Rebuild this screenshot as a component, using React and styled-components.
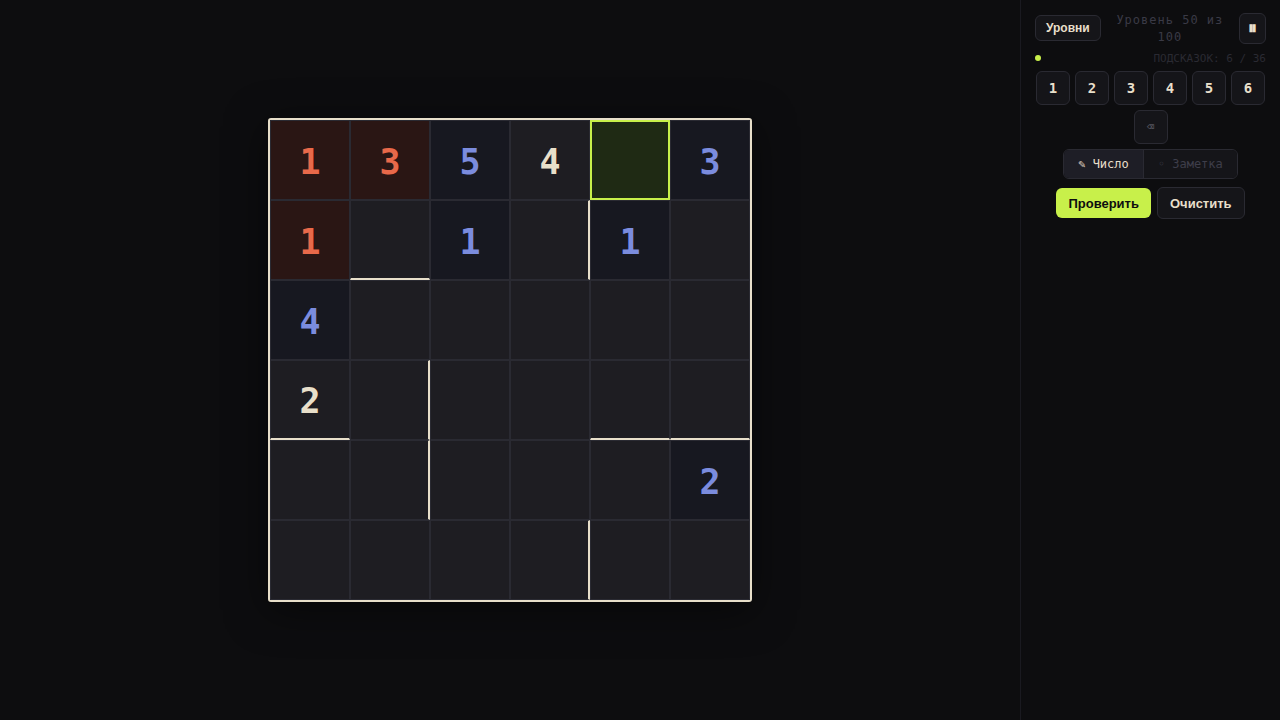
import React from "react";
import styled, { createGlobalStyle, css } from "styled-components";

const MONO = '"DejaVu Sans Mono", "Liberation Mono", monospace';
const SANS = '"Liberation Sans", sans-serif';
const CREAM = "#e8dfca";

const GlobalStyle = createGlobalStyle`
  * { box-sizing: border-box; }
  body { margin: 0; background: #0d0d0f; color: ${CREAM}; }
  button { font-family: inherit; cursor: pointer; }
`;

const Page = styled.div`
  display: flex;
  min-height: 100vh;
  background: #0d0d0f;
  font-family: ${MONO};
`;

const Stage = styled.main`
  flex: 1;
  display: flex;
  align-items: center;
  justify-content: center;
  padding: 24px;
`;

const Board = styled.div`
  display: grid;
  grid-template-columns: repeat(6, 80px);
  grid-auto-rows: 80px;
  border: 2px solid ${CREAM};
  border-radius: 3px;
  overflow: hidden;
  box-shadow: 0 8px 40px rgba(0, 0, 0, 0.5);
`;

const tones = {
  empty: { bg: "#1e1d22", fg: CREAM },
  given: { bg: "#1e1d22", fg: CREAM },
  user: { bg: "#171820", fg: "#7b8cde" },
  error: { bg: "#2a1614", fg: "#e8694a" },
  selected: { bg: "#1f2a14", fg: "#c8f04a" },
};

const Cell = styled.button`
  display: flex;
  align-items: center;
  justify-content: center;
  padding: 4px 0 0;
  border: 1px solid #2a2a32;
  background: ${(p) => tones[p.$tone].bg};
  color: ${(p) => tones[p.$tone].fg};
  font-size: 35px;
  font-weight: 700;
  line-height: 1;
  ${(p) => p.$wall === "right" && css`border-right: 2px solid ${CREAM};`}
  ${(p) => p.$wall === "bottom" && css`border-bottom: 2px solid ${CREAM};`}
  ${(p) => p.$tone === "selected" && css`border: 2px solid #c8f04a;`}
`;

const Sidebar = styled.aside`
  width: 260px;
  flex: none;
  display: flex;
  flex-direction: column;
  padding: 10px 14px;
  border-left: 1px solid #1a1a20;
`;

const Header = styled.header`
  display: flex;
  align-items: center;
  justify-content: space-between;
  gap: 8px;
`;

const Button = styled.button`
  padding: 0 10px;
  height: 26px;
  border: 1px solid #2a2a32;
  border-radius: 6px;
  background: #151519;
  color: ${CREAM};
  font-size: 12px;
  font-weight: 700;
`;

const PauseButton = styled(Button)`
  width: 27px;
  height: 31px;
  padding: 0;
  font-size: 18px;
  line-height: 1;
`;

const Title = styled.h1`
  flex: 1;
  margin: 0;
  padding-top: 2px;
  text-align: center;
  color: #3a3a46;
  font-size: 12px;
  line-height: 17px;
  font-weight: 400;
  letter-spacing: 1px;
`;

const Status = styled.div`
  display: flex;
  align-items: center;
  justify-content: space-between;
  height: 16px;
  margin: 4px 0 5px;
  color: #2a2a32;
  font-size: 11px;
`;

const Dot = styled.span`
  width: 6px;
  height: 6px;
  border-radius: 50%;
  background: #c8f04a;
`;

const Keypad = styled.div`
  display: flex;
  flex-wrap: wrap;
  justify-content: center;
  gap: 5px;
`;

const Key = styled(Button)`
  width: 34px;
  height: 34px;
  padding: 0;
  font-size: 14px;
  ${(p) => p.$muted && css`color: #55555f; font-size: 12px; font-weight: 400;`}
`;

const Modes = styled.div`
  align-self: center;
  display: flex;
  height: 30px;
  margin: 5px 0 8px;
  border: 1px solid #2a2a32;
  border-radius: 6px;
  overflow: hidden;
`;

const Mode = styled.button`
  padding: 0 14px;
  border: 0;
  background: ${(p) => (p.$active ? "#1e1e26" : "#151519")};
  color: ${(p) => (p.$active ? CREAM : "#3e3e4a")};
  font-size: 12px;
  & + & { border-left: 1px solid #2a2a32; }
`;

const Actions = styled.div`
  display: flex;
  justify-content: center;
  align-items: center;
  gap: 6px;
`;

const Action = styled(Button)`
  height: 32px;
  padding: 0 12px;
  font-family: ${SANS};
  font-size: 13px;
  ${(p) => p.$primary && css`
    height: 30px;
    border: 0;
    background: #c8f04a;
    color: #0d0d0f;
  `}
`;

const LevelsButton = styled(Button)`
  font-family: ${SANS};
`;

const cells = {
  "0-0": { value: 1, tone: "error" },
  "0-1": { value: 3, tone: "error" },
  "0-2": { value: 5, tone: "user" },
  "0-3": { value: 4, tone: "given" },
  "0-4": { tone: "selected" },
  "0-5": { value: 3, tone: "user" },
  "1-0": { value: 1, tone: "error" },
  "1-1": { wall: "bottom" },
  "1-2": { value: 1, tone: "user" },
  "1-3": { wall: "right" },
  "1-4": { value: 1, tone: "user" },
  "2-0": { value: 4, tone: "user" },
  "3-0": { value: 2, tone: "given", wall: "bottom" },
  "3-1": { wall: "right" },
  "3-4": { wall: "bottom" },
  "3-5": { wall: "bottom" },
  "4-1": { wall: "right" },
  "4-5": { value: 2, tone: "user" },
  "5-3": { wall: "right" },
};

const size = [0, 1, 2, 3, 4, 5];

export default function App() {
  return (
    <>
      <GlobalStyle />
      <Page>
        <Stage>
          <Board>
            {size.map((row) =>
              size.map((col) => {
                const { value, tone = "empty", wall } = cells[`${row}-${col}`] || {};
                return (
                  <Cell key={`${row}-${col}`} $tone={tone} $wall={wall}>
                    {value}
                  </Cell>
                );
              })
            )}
          </Board>
        </Stage>
        <Sidebar>
          <Header>
            <LevelsButton>Уровни</LevelsButton>
            <Title>Уровень 50 из 100</Title>
            <PauseButton>⏸</PauseButton>
          </Header>
          <Status>
            <Dot />
            <span>ПОДСКАЗОК: 6 / 36</span>
          </Status>
          <Keypad>
            {size.map((n) => (
              <Key key={n}>{n + 1}</Key>
            ))}
            <Key $muted>⌫</Key>
          </Keypad>
          <Modes>
            <Mode $active>✎ Число</Mode>
            <Mode>◦ Заметка</Mode>
          </Modes>
          <Actions>
            <Action $primary>Проверить</Action>
            <Action>Очистить</Action>
          </Actions>
        </Sidebar>
      </Page>
    </>
  );
}
